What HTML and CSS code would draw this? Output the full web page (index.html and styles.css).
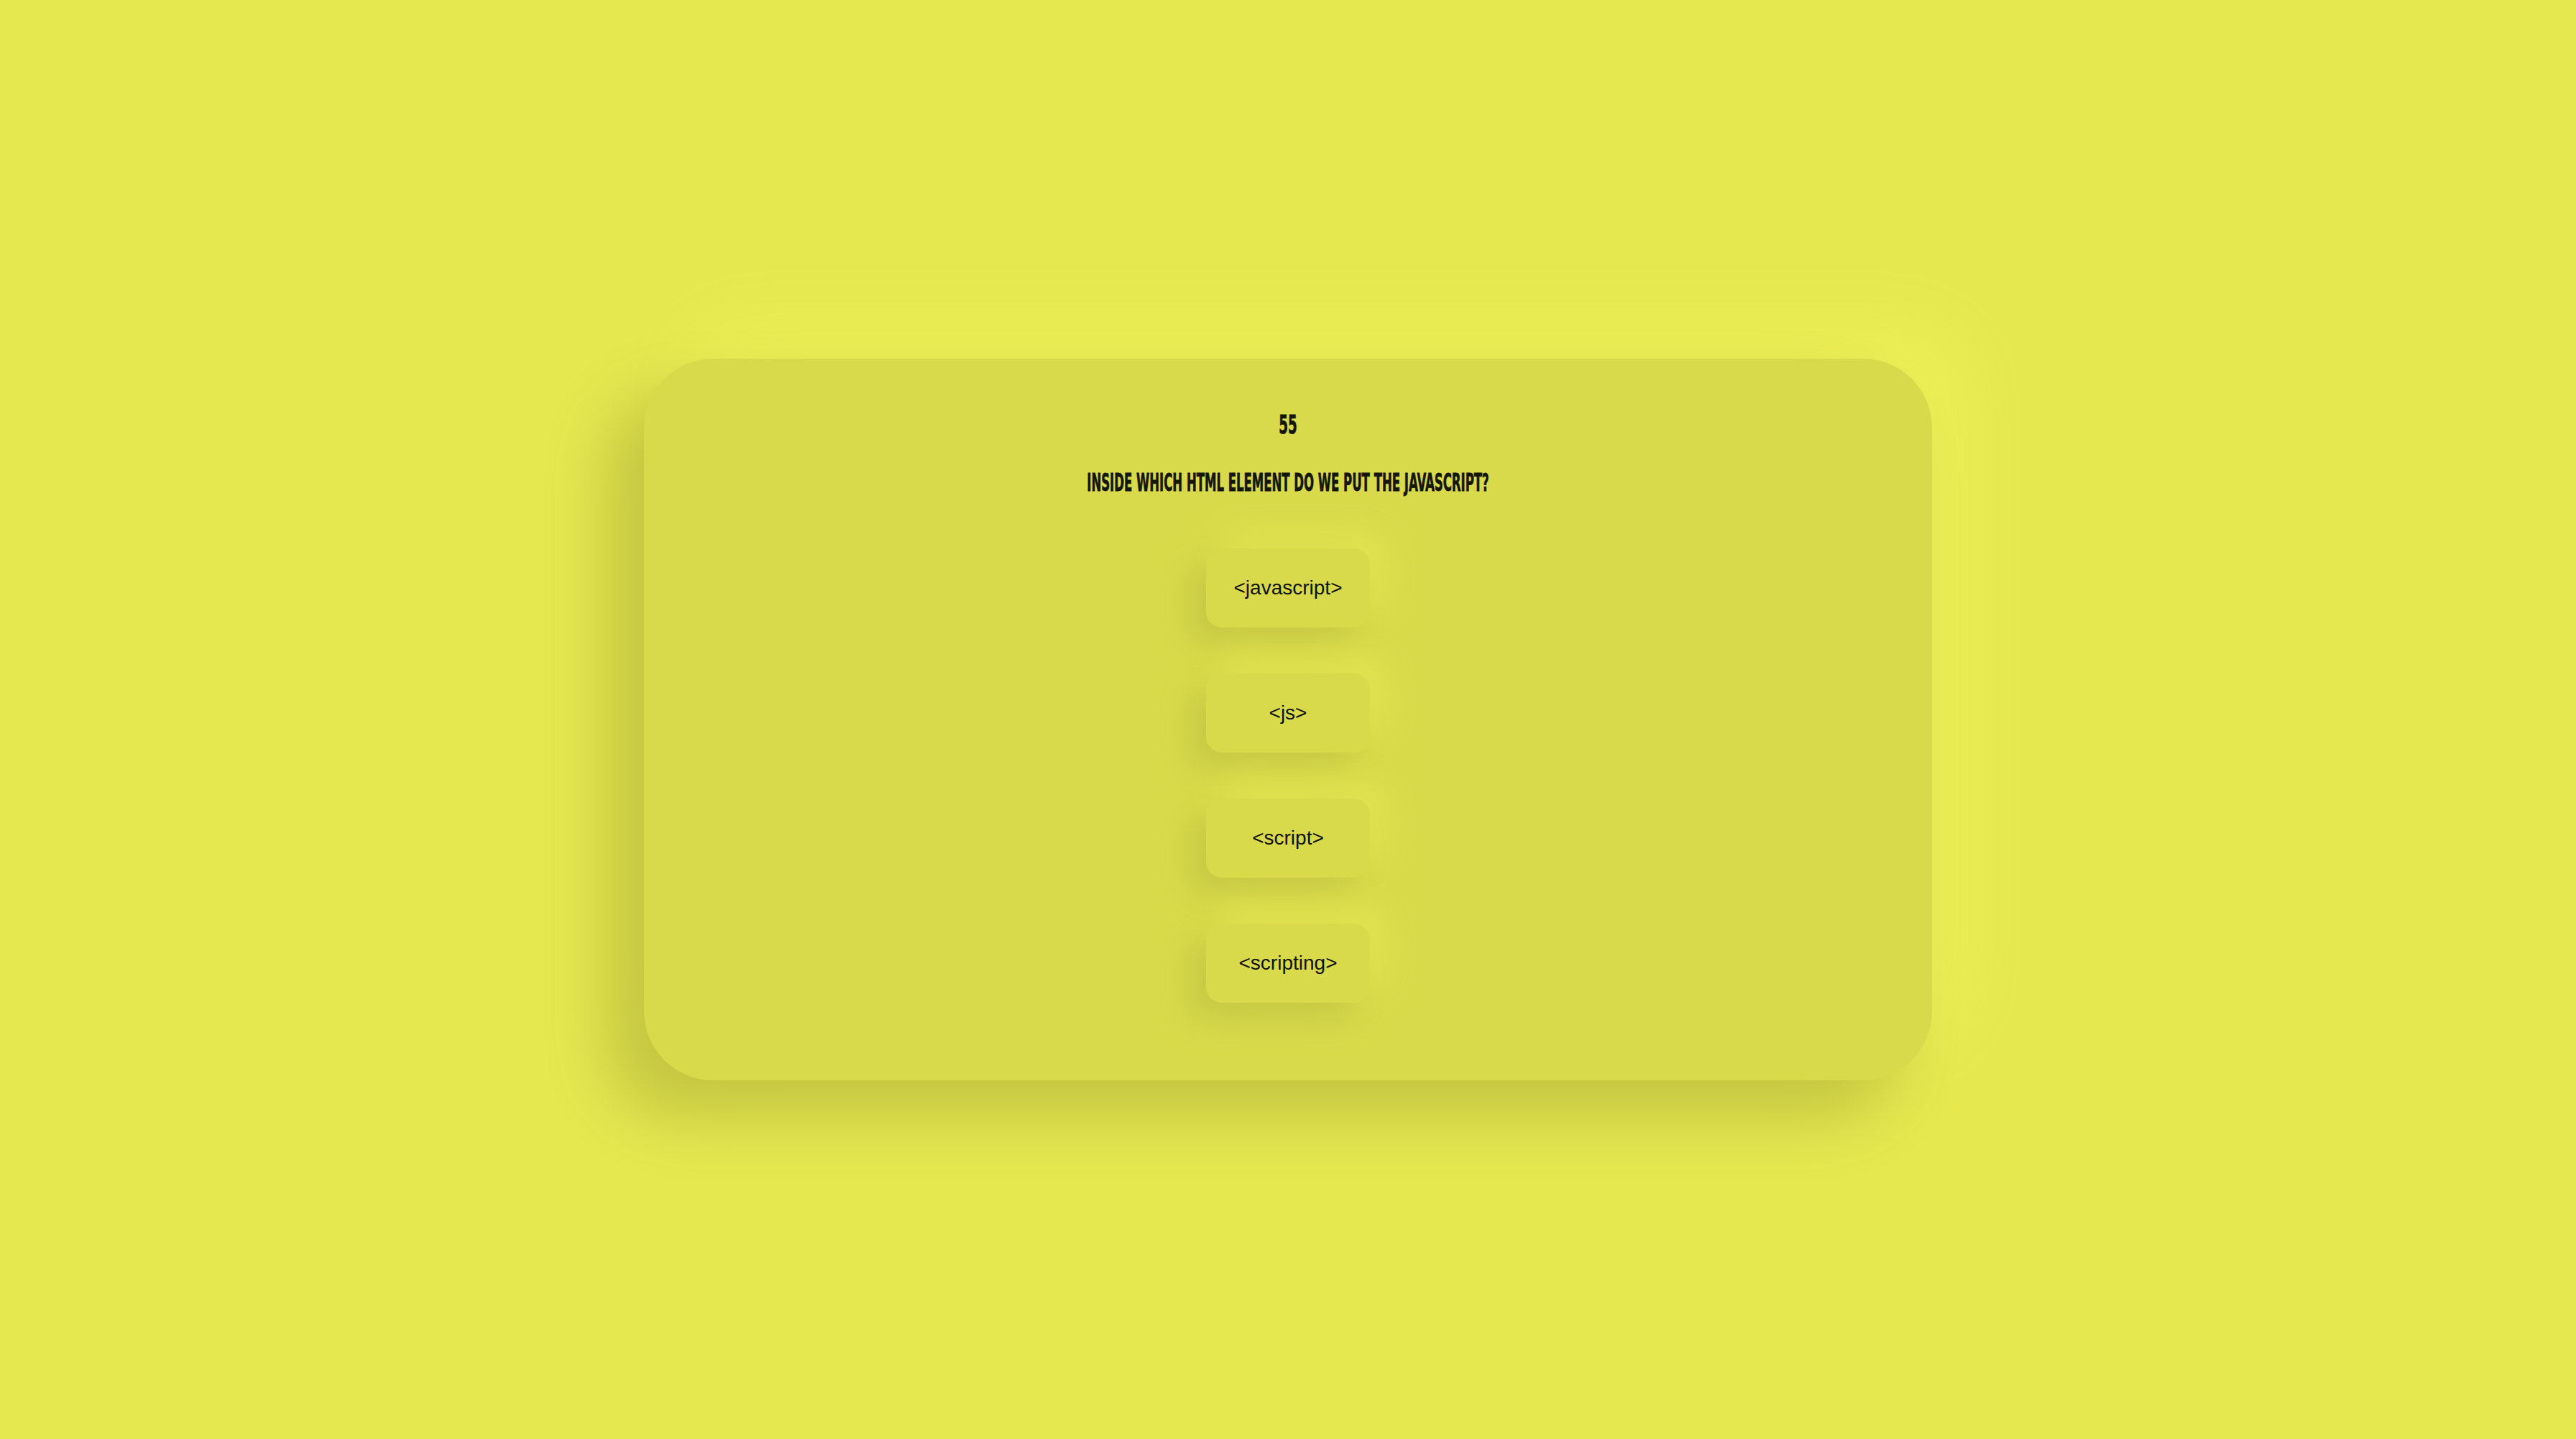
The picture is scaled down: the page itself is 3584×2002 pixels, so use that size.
FILE: index.html
```html
<!DOCTYPE html>
<html lang="en">
<head>
<meta charset="utf-8">
<title>Quiz</title>
<link rel="stylesheet" href="styles.css">
</head>
<body>
  <main class="quiz-card">
    <h1 class="quiz-number"><span class="condensed condensed-num">55</span></h1>
    <h2 class="quiz-question"><span class="condensed condensed-q">Inside which HTML element do we put the JavaScript?</span></h2>
    <div class="answers">
      <button class="answer">&lt;javascript&gt;</button>
      <button class="answer">&lt;js&gt;</button>
      <button class="answer">&lt;script&gt;</button>
      <button class="answer">&lt;scripting&gt;</button>
    </div>
  </main>
</body>
</html>
```
FILE: styles.css
```css
html, body {
  margin: 0;
  padding: 0;
}

body {
  background: #e6e850;
  min-height: 100vh;
  display: flex;
  align-items: center;
  justify-content: center;
  font-family: "Liberation Sans", Arial, sans-serif;
  color: #14140a;
}

.quiz-card {
  width: 1792px;
  box-sizing: border-box;
  padding: 75px 0 108px;
  background: #d8da4b;
  border-radius: 96px;
  display: flex;
  flex-direction: column;
  align-items: center;
  box-shadow: -50px 50px 90px #c3c540, 50px -50px 90px #ecef57;
}

.quiz-number,
.quiz-question {
  margin: 0;
  font-family: "Liberation Sans Narrow", "DejaVu Sans Condensed", "Liberation Sans", sans-serif;
  font-weight: 700;
  text-transform: uppercase;
  line-height: 1;
  color: #15150a;
  white-space: nowrap;
  -webkit-text-stroke: 0.8px #15150a;
}

.quiz-number {
  font-size: 35px;
}

.quiz-question {
  font-size: 34px;
  margin-top: 45px;
}

.condensed {
  display: inline-block;
  transform-origin: center;
}

.condensed-num {
  transform: scaleX(0.58);
}

.condensed-q {
  transform: scaleX(0.54);
}

.answers {
  margin-top: 75px;
  display: flex;
  flex-direction: column;
  align-items: center;
  gap: 64px;
}

.answer {
  width: 228px;
  height: 110px;
  border: none;
  border-radius: 22px;
  background: #d8da4b;
  font-family: "Liberation Sans", Arial, sans-serif;
  font-size: 28px;
  color: #111108;
  padding: 0;
  box-shadow: -22px 22px 44px #c7c944, 22px -22px 44px #e2e551;
}
```
